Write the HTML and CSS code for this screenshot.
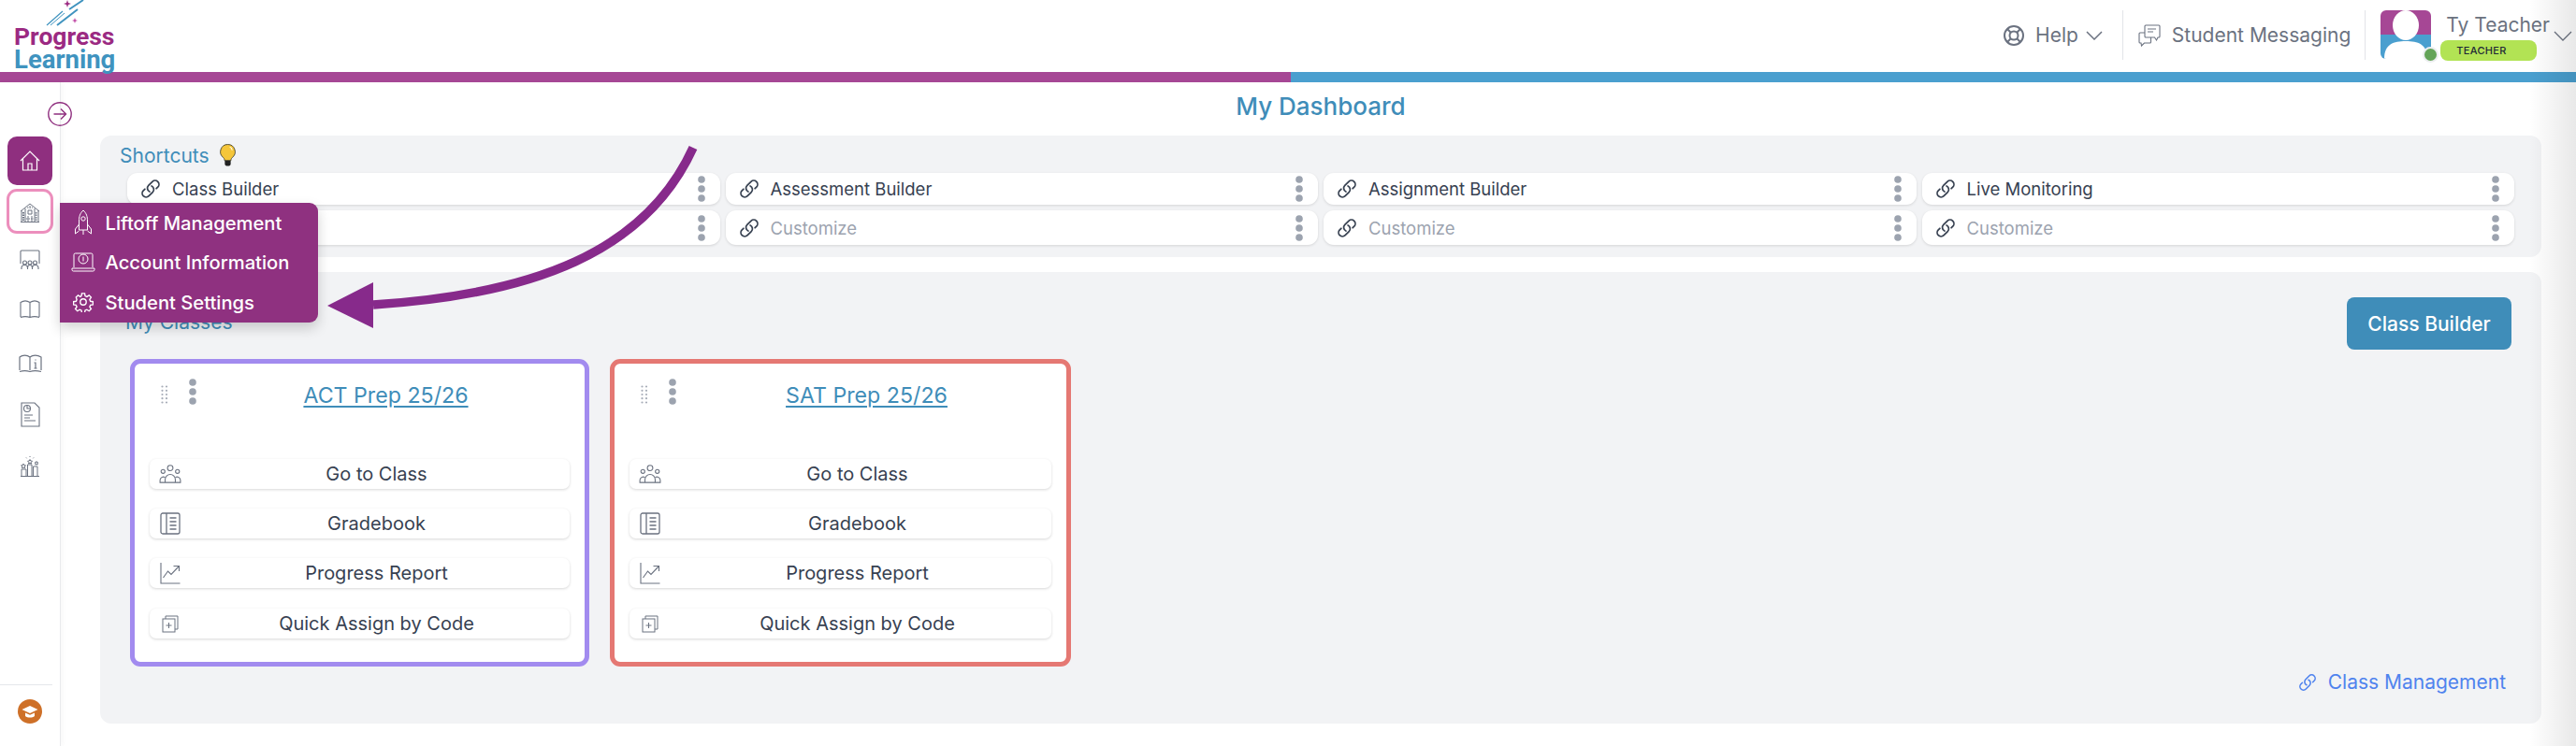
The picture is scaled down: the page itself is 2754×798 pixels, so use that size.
FILE: index.html
```html
<!DOCTYPE html>
<html lang="en">
<head>
<meta charset="utf-8">
<title>My Dashboard</title>
<link rel="stylesheet" href="styles.css">
</head>
<body>
<svg class="sprites" width="0" height="0">
  <symbol id="link" viewBox="0 0 24 24"><path d="M13.190 8.688a4.500 4.500 0 0 1 1.242 7.244l-4.500 4.500a4.500 4.500 0 0 1-6.364-6.364l1.757-1.757m13.350-.622 1.757-1.757a4.500 4.500 0 0 0-6.364-6.364l-4.500 4.500a4.500 4.500 0 0 0 1.242 7.244" fill="none" stroke="currentColor" stroke-width="1.900" stroke-linecap="round" stroke-linejoin="round"/></symbol>
  <symbol id="dots" viewBox="0 0 8 28"><circle cx="4" cy="4" r="3.800"/><circle cx="4" cy="14" r="3.800"/><circle cx="4" cy="24" r="3.800"/></symbol>
  <symbol id="grip" viewBox="0 0 8 20"><g fill="#a7adb8"><circle cx="1.500" cy="1.500" r="1.100"/><circle cx="6" cy="1.500" r="1.100"/><circle cx="1.500" cy="5.800" r="1.100"/><circle cx="6" cy="5.800" r="1.100"/><circle cx="1.500" cy="10" r="1.100"/><circle cx="6" cy="10" r="1.100"/><circle cx="1.500" cy="14.200" r="1.100"/><circle cx="6" cy="14.200" r="1.100"/><circle cx="1.500" cy="18.500" r="1.100"/><circle cx="6" cy="18.500" r="1.100"/></g></symbol>
  <symbol id="people" viewBox="0 0 26 22"><g fill="none" stroke="currentColor" stroke-width="1.200"><circle cx="13" cy="4" r="3.200"/><circle cx="4.500" cy="8" r="2.300"/><circle cx="21.500" cy="8" r="2.300"/><path d="M7 21v-3.500a6 6 0 0 1 12 0V21"/><path d="M7 15a4 4 0 0 0-6 3.500V21h24v-2.500a4 4 0 0 0-6-3.500"/></g></symbol>
  <symbol id="ledger" viewBox="0 0 22 24"><g fill="none" stroke="currentColor" stroke-width="1.300"><rect x="1" y="1" width="20" height="22" rx="2"/><path d="M7 1v22"/><path d="M10.500 6h7M10.500 10h7M10.500 14h7M10.500 18h7"/></g></symbol>
  <symbol id="chart" viewBox="0 0 22 24"><g fill="none" stroke="currentColor" stroke-width="1.100"><path d="M1 1v22h20.500"/><path d="M3.500 17l5-7 3.500 3.500L20 5"/><path d="M14.500 4.500H20.500V10"/></g></symbol>
  <symbol id="copy" viewBox="0 0 18 20"><g fill="none" stroke="currentColor" stroke-width="1"><rect x="1" y="5" width="13" height="14"/><path d="M4 5V2h13v14h-3"/><path d="M7.500 9v6M4.500 12h6"/></g></symbol>
</svg>

<header class="topbar">
  <div class="logo">
    <svg class="logo-mark" width="90" height="28" viewBox="0 0 90 28"><g stroke="#3f93bf" fill="none"><path d="M50 27 67 12" stroke-width="1.200"/><path d="M54 27 69 14" stroke-width="1"/><path d="M61 27 83 10" stroke-width="2"/><path d="M74 10 89 0" stroke-width="2"/></g><path d="M72 0l1 3 3 1-3 1-1 3-1-3-3-1 3-1z" fill="#9b2a82"/><path d="M80 19l.8 2.200 2.200.8-2.200.8-.8 2.200-.8-2.200-2.200-.8 2.200-.8z" fill="#c04aa5"/></svg>
    <span class="logo-a">Progress</span>
    <span class="logo-b">Learning</span>
  </div>
  <nav class="top-nav">
    <div class="top-item help">
      <svg width="24" height="24" viewBox="0 0 24 24" fill="none" stroke="#6b7280" stroke-width="2"><circle cx="12" cy="12" r="10"/><circle cx="12" cy="12" r="4.500"/><path d="M5 5l4 4M19 5l-4 4M5 19l4-4M19 19l-4-4"/></svg>
      <span>Help</span>
      <svg class="chev" width="18" height="10" viewBox="0 0 18 10" fill="none" stroke="#6b7280" stroke-width="1.500"><path d="M1 1l8 8 8-8"/></svg>
    </div>
    <div class="top-item msg">
      <svg width="24" height="24" viewBox="0 0 24 24" fill="none" stroke="#6b7280" stroke-width="1.100"><path d="M8 1h14a1 1 0 0 1 1 1v11a1 1 0 0 1-1 1h-1l-1.500 3-2-3H8a1 1 0 0 1-1-1V2a1 1 0 0 1 1-1z"/><path d="M10 5h9M10 8h6"/><path d="M7 9H2a1 1 0 0 0-1 1v9a1 1 0 0 0 1 1h1l.5 3 3-3h6a1 1 0 0 0 1-1v-5"/></svg>
      <span>Student Messaging</span>
    </div>
    <div class="user">
      <div class="avatar">
        <svg width="54" height="52" viewBox="0 0 54 52"><rect width="54" height="26" fill="#a64795"/><rect y="26" width="54" height="26" fill="#4a9fcf"/><ellipse cx="27" cy="16" rx="14" ry="16" fill="#fff"/><path d="M4 52c0-16 10-19 23-19s23 3 23 19z" fill="#fff"/></svg>
        <i class="presence"></i>
      </div>
      <div class="user-text">
        <span class="user-name">Ty Teacher</span>
        <span class="user-role">TEACHER</span>
      </div>
      <svg class="user-chev" width="20" height="11" viewBox="0 0 20 11" fill="none" stroke="#6b7280" stroke-width="1.300"><path d="M1 1l9 9 9-9"/></svg>
    </div>
  </nav>
</header>
<div class="stripe"><span class="stripe-a"></span><span class="stripe-b"></span></div>

<div class="shell">
  <aside class="sidebar">
    <div class="side-toggle">
      <svg width="26" height="26" viewBox="0 0 26 26" fill="none" stroke="#8f2f7f" stroke-width="1.400"><circle cx="13" cy="13" r="12.200"/><path d="M6.500 13h13M14 7.500l5.500 5.500-5.500 5.500"/></svg>
    </div>
    <div class="side-tile active">
      <svg width="22" height="22" viewBox="0 0 22 22" fill="none" stroke="#fff" stroke-width="1.200"><path d="M1 11 11 1l10 10"/><path d="M3.500 9v12h15V9"/><path d="M9 21v-7h4v7"/></svg>
    </div>
    <div class="side-tile outlined">
      <svg width="22" height="22" viewBox="0 0 22 22" fill="none" stroke="#6b7280" stroke-width="1"><path d="M1 9 11 1l10 8"/><path d="M2 8v12M20 8v12M6 6v14M16 6v14M9 8h4v4H9zM9 14v6M13 14v6M1 20.500h20"/><path d="M3.500 10v9M4.500 10v9M18 10v9M17.200 10v9M11 3v3M8 5h6M7 17h8" stroke-dasharray="1.500 1"/></svg>
    </div>
    <div class="side-icon class-room">
      <svg width="22" height="22" viewBox="0 0 22 22" fill="none" stroke="#6b7280" stroke-width="1.100"><path d="M1 15V2a1 1 0 0 1 1-1h18a1 1 0 0 1 1 1v13"/><circle cx="5.500" cy="14" r="2"/><circle cx="11" cy="14" r="2"/><circle cx="16.500" cy="14" r="2"/><path d="M2 21v-1.500c0-2 1.500-3 3.500-3s3 1 3 3V21M8.500 21v-1.500c0-2 1-3 2.500-3s2.500 1 2.500 3V21M13.500 21v-1.500c0-2 1-3 3-3s3.500 1 3.500 3V21"/></svg>
    </div>
    <div class="side-icon book">
      <svg width="22" height="20" viewBox="0 0 22 20" fill="none" stroke="#6b7280" stroke-width="1.100"><path d="M1 18V2.500c3-2 7-2 10 0 3-2 7-2 10 0V18M11 2.500V18M1 18.500c3-1 7-1 10 0 3-1 7-1 10 0"/></svg>
    </div>
    <div class="side-icon book-info">
      <svg width="25" height="20" viewBox="0 0 25 20" fill="none" stroke="#6b7280" stroke-width="1.200"><path d="M1 17V3c3-2.500 8-2.500 11 0 3-2.500 8-2.500 12 0v14M12 3v14M1 18.500c3-1 8-1 11 0 3-1 8-1 12 0"/><path d="M18 5.500v1M16.500 9H18v6M16.500 15h3"/></svg>
    </div>
    <div class="side-icon report">
      <svg width="21" height="27" viewBox="0 0 21 27" fill="none" stroke="#6b7280" stroke-width="1.100"><path d="M1 1h14l5 5v20H1z"/><circle cx="7" cy="7" r="3.500"/><path d="M7 4v3h3M4 14h9M4 17h6M4 20h12"/></svg>
    </div>
    <div class="side-icon awards">
      <svg width="22" height="23" viewBox="0 0 22 23" fill="none" stroke="#6b7280" stroke-width="1"><path d="M1 21.500h20"/><path d="M2 21v-7h5v7M8.500 21V9h4.500v12M14.500 21V11h4.500v10"/><path d="M4 8l.8 1.600 1.700.2-1.200 1.200.3 1.700L4 12l-1.500.7.300-1.700L1.600 9.800l1.700-.2zM18 5.500l.6 1.200 1.300.2-1 .9.300 1.300-1.200-.6-1.200.6.300-1.300-1-.9 1.300-.2z"/><path d="M11 3.500l.8 1.500 1.700.2-1.200 1.200.3 1.600-1.600-.8-1.500.8.300-1.600-1.200-1.200 1.700-.2z"/><path d="M11 0v1.500M7 1.500l1 1.200M15 1.500l-1 1.200" stroke-dasharray="1 .6"/></svg>
    </div>
    <div class="side-foot">
      <svg width="26" height="26" viewBox="0 0 26 26"><circle cx="13" cy="13" r="13" fill="#ce7028"/><path d="M4.500 11 13 7l8.500 4-8.500 4z" fill="#fff"/><path d="M8 14.500V18c2.500 2 7.500 2 10 0v-3.500l-5 2.300z" fill="#fff"/></svg>
    </div>
  </aside>

  <main class="content">
    <h1 class="page-title">My Dashboard</h1>

    <section class="panel shortcuts">
      <div class="shortcuts-head">
        <span>Shortcuts</span>
        <svg width="17" height="24" viewBox="0 0 16 23"><path d="M8 .5a7.500 7.500 0 0 0-4.500 13.500c1 1 1.200 2 1.200 3h6.600c0-1 .2-2 1.200-3A7.500 7.500 0 0 0 8 .5z" fill="#f5c63a" stroke="#3a3a2a" stroke-width=".8"/><path d="M5 17h6v3.500c0 1-1 2-3 2s-3-1-3-2z" fill="#222"/><path d="M10 3a4 4 0 0 1 2.500 3.500" fill="none" stroke="#fff" stroke-width="1"/></svg>
      </div>
      <div class="chip-grid">
        <div class="chip"><svg class="chip-link"><use href="#link"/></svg><span>Class Builder</span><svg class="kebab"><use href="#dots"/></svg></div>
        <div class="chip"><svg class="chip-link"><use href="#link"/></svg><span>Assessment Builder</span><svg class="kebab"><use href="#dots"/></svg></div>
        <div class="chip"><svg class="chip-link"><use href="#link"/></svg><span>Assignment Builder</span><svg class="kebab"><use href="#dots"/></svg></div>
        <div class="chip"><svg class="chip-link"><use href="#link"/></svg><span>Live Monitoring</span><svg class="kebab"><use href="#dots"/></svg></div>
        <div class="chip tall muted"><svg class="chip-link"><use href="#link"/></svg><span>Customize</span><svg class="kebab"><use href="#dots"/></svg></div>
        <div class="chip tall muted"><svg class="chip-link"><use href="#link"/></svg><span>Customize</span><svg class="kebab"><use href="#dots"/></svg></div>
        <div class="chip tall muted"><svg class="chip-link"><use href="#link"/></svg><span>Customize</span><svg class="kebab"><use href="#dots"/></svg></div>
        <div class="chip tall muted"><svg class="chip-link"><use href="#link"/></svg><span>Customize</span><svg class="kebab"><use href="#dots"/></svg></div>
      </div>
    </section>

    <section class="panel classes">
      <div class="classes-head">
        <span class="classes-title">My Classes</span>
        <button class="primary">Class Builder</button>
      </div>
      <div class="class-row">
        <article class="class-card violet">
          <div class="card-head">
            <svg class="grip"><use href="#grip"/></svg>
            <svg class="kebab"><use href="#dots"/></svg>
            <a class="card-title">ACT Prep 25/26</a>
          </div>
          <div class="card-actions">
            <div class="action"><svg class="a-people"><use href="#people"/></svg><span>Go to Class</span></div>
            <div class="action"><svg class="a-ledger"><use href="#ledger"/></svg><span>Gradebook</span></div>
            <div class="action"><svg class="a-ledger"><use href="#chart"/></svg><span>Progress Report</span></div>
            <div class="action last"><svg class="a-copy"><use href="#copy"/></svg><span>Quick Assign by Code</span></div>
          </div>
        </article>
        <article class="class-card coral">
          <div class="card-head">
            <svg class="grip"><use href="#grip"/></svg>
            <svg class="kebab"><use href="#dots"/></svg>
            <a class="card-title">SAT Prep 25/26</a>
          </div>
          <div class="card-actions">
            <div class="action"><svg class="a-people"><use href="#people"/></svg><span>Go to Class</span></div>
            <div class="action"><svg class="a-ledger"><use href="#ledger"/></svg><span>Gradebook</span></div>
            <div class="action"><svg class="a-ledger"><use href="#chart"/></svg><span>Progress Report</span></div>
            <div class="action last"><svg class="a-copy"><use href="#copy"/></svg><span>Quick Assign by Code</span></div>
          </div>
        </article>
      </div>
      <div class="classes-foot">
        <a class="manage"><svg class="manage-link"><use href="#link"/></svg>Class Management</a>
      </div>
    </section>
  </main>
</div>

<div class="flyout">
  <div class="fly-item">
    <span class="fly-icon"><svg width="20" height="28" viewBox="0 0 20 28" fill="none" stroke="#fff" stroke-width="1"><path d="M10 1c3.500 3 4.500 7 4.500 11v10h-9V12C5.500 8 6.500 4 10 1z"/><circle cx="10" cy="10" r="2.200"/><path d="M5.500 16 1.500 21v5l4-3M14.500 16l4 5v5l-4-3M10 22v5"/></svg></span>
    <span>Liftoff Management</span>
  </div>
  <div class="fly-item">
    <span class="fly-icon"><svg width="26" height="21" viewBox="0 0 26 21" fill="none" stroke="#fff" stroke-width="1"><path d="M3 16V2.500A1.500 1.500 0 0 1 4.500 1h17A1.500 1.500 0 0 1 23 2.500V16"/><circle cx="13" cy="7" r="5"/><path d="M13 4.500v5"/><path d="M1 17h24v1.500a1.500 1.500 0 0 1-1.500 1.500h-21A1.500 1.500 0 0 1 1 18.500z"/></svg></span>
    <span>Account Information</span>
  </div>
  <div class="fly-item">
    <span class="fly-icon"><svg width="22" height="22" viewBox="0 0 24 24" fill="none" stroke="#fff" stroke-width="1.500"><circle cx="12" cy="12" r="3.500"/><path d="M10.300 2h3.400l.5 3 2 .9 2.600-1.700 2.400 2.400-1.700 2.600.9 2 3 .5v3.400l-3 .5-.9 2 1.700 2.600-2.400 2.400-2.600-1.700-2 .9-.5 3h-3.400l-.5-3-2-.9-2.600 1.700-2.400-2.400 1.700-2.600-.9-2-3-.5v-3.400l3-.5.9-2L3.600 6.600 6 4.200l2.600 1.700 1.200-.9z"/></svg></span>
    <span>Student Settings</span>
  </div>
</div>

<svg class="callout" width="460" height="240" viewBox="0 0 460 240">
  <path d="M391 8C340 120 220 165 49 176" fill="none" stroke="#872a8b" stroke-width="9.500"/>
  <path d="M0 177 49 152V201z" fill="#872a8b"/>
</svg>
<div class="edge-shade"></div>
</body>
</html>
```

FILE: styles.css
```css
* { box-sizing: border-box; }
html, body { margin: 0; padding: 0; }
body {
  position: relative;
  width: 2754px;
  height: 798px;
  overflow: hidden;
  background: #fff;
  font-family: Inter, "Liberation Sans", sans-serif;
  color: #374151;
}
.sprites { position: absolute; }

/* top bar */
.topbar {
  height: 77px;
  display: flex;
  justify-content: space-between;
  background: #fff;
}
.logo {
  width: 140px;
  padding-left: 15px;
  display: flex;
  flex-direction: column;
  position: relative;
  font-family: Roboto, Inter, sans-serif;
  font-weight: 700;
  font-size: 26.500px;
  line-height: 25px;
}
.logo-mark { position: absolute; left: 0; top: 0; }
.logo-a { color: #9b2a82; margin-top: 26px; }
.logo-b { color: #3f93bf; font-size: 27.500px; }

.top-nav { display: flex; align-items: stretch; padding-right: 4px; }
.top-item {
  display: flex;
  align-items: center;
  font-size: 21px;
  color: #6b7280;
  margin: 11px 0 13px;
}
.help { padding-right: 21px; border-right: 1px solid #e2e4e8; }
.help span { margin-left: 11px; }
.help .chev { margin-left: 8px; }
.msg { padding: 0 15px 0 16px; border-right: 1px solid #e2e4e8; }
.msg span { margin-left: 12px; }

.user { display: flex; padding-left: 16px; position: relative; }
.avatar {
  position: relative;
  width: 54px;
  height: 52px;
  margin-top: 11px;
  border-radius: 6px;
  border-bottom: 1px solid #d1d5db;
}
.avatar svg { display: block; border-radius: 6px; }
.presence {
  position: absolute;
  right: -8px;
  bottom: -5px;
  width: 17px;
  height: 17px;
  border-radius: 50%;
  background: #64a458;
  border: 2px solid #eceef0;
}
.user-text { display: flex; flex-direction: column; margin-left: 10px; align-items: flex-start; }
.user-name { font-size: 21px; line-height: 24px; margin: 15px 0 4px 6px; color: #6b7280; white-space: nowrap; }
.user-role {
  width: 103px;
  height: 22px;
  border-radius: 8px;
  background: #b2e354;
  color: #1f2937;
  font-size: 11px;
  font-weight: 500;
  line-height: 22px;
  padding-left: 17px;
  letter-spacing: .3px;
}
.user-chev { margin: 33px 0 0 4px; }

.stripe { display: flex; height: 11px; }
.stripe-a { width: 1380px; background: #a64795; }
.stripe-b { flex: 1; background: #4a9fcf; }

/* shell */
.shell { display: flex; height: 710px; }
.sidebar {
  width: 65px;
  flex: none;
  border-right: 1px solid #e9eaec;
  box-shadow: 2px 0 6px rgba(0,0,0,.03);
  display: flex;
  flex-direction: column;
  align-items: flex-start;
}
.side-toggle { height: 26px; margin: 21px 0 11px 51px; }
.side-toggle svg { display: block; position: relative; z-index: 3; }
.side-tile {
  display: flex;
  align-items: center;
  justify-content: center;
  width: 48px;
  margin-left: 8px;
  border-radius: 10px;
}
.side-tile.active { height: 52px; background: #8f2f7f; margin-bottom: 4px; }
.side-tile.outlined { height: 48px; width: 50px; margin-left: 7px; padding-top: 4px; background: #fff; border: 3px solid #ec8fbd; border-radius: 11px; }
.side-icon { width: 64px; display: flex; justify-content: center; }
.side-icon svg { display: block; }
.class-room { margin-top: 17px; }
.book { margin-top: 32px; }
.book-info { margin-top: 38px; }
.report { margin-top: 31px; }
.awards { margin-top: 31px; }
.side-foot {
  margin-top: auto;
  width: 56px;
  height: 66px;
  border-top: 1px solid #e5e7eb;
  padding: 15px 0 0 19px;
}
.side-foot svg { display: block; }

.content { flex: 1; padding: 0 37px 0 42px; min-width: 0; }
.page-title {
  margin: 0;
  height: 57px;
  font-size: 26px;
  font-weight: 500;
  line-height: 51px;
  text-align: center;
  color: #3f8db9;
}
.panel { background: #f2f3f5; border-radius: 12px; }

/* shortcuts */
.shortcuts { height: 130px; margin-bottom: 16px; padding: 9px 29px 0; }
.shortcuts-head {
  display: flex;
  align-items: center;
  gap: 11px;
  height: 24px;
  margin: 0 0 7px -8px;
  font-size: 21px;
  color: #3f8db9;
}
.chip-grid { display: grid; grid-template-columns: repeat(4, 1fr); column-gap: 6px; row-gap: 6px; }
.chip {
  height: 34px;
  display: flex;
  align-items: center;
  background: #fff;
  border-radius: 11px;
  box-shadow: 0 1px 3px rgba(0,0,0,.12);
  font-size: 18.500px;
  padding: 0 16px 0 14px;
  color: #374151;
}
.chip.tall { height: 37px; }
.chip.muted span { color: #9ca3af; }
.chip-link { width: 22px; height: 22px; color: #374151; flex: none; margin-right: 12px; }
.chip span { flex: 1; }
.kebab { width: 8px; height: 28px; fill: #9ca3af; flex: none; }

/* classes */
.classes { height: 483px; padding: 27px 32px 0; }
.classes-head { display: flex; justify-content: space-between; height: 56px; }
.classes-title { font-size: 21px; color: #3f8db9; margin: 15px 0 0 -5px; line-height: 24px; }
.primary {
  width: 176px;
  height: 56px;
  border: 0;
  border-radius: 8px;
  background: #3f8db9;
  color: #fff;
  font: 500 21px Inter, sans-serif;
}
.class-row { display: flex; gap: 22px; margin-top: 10px; }
.class-card {
  width: 491px;
  height: 329px;
  background: #fff;
  border: 5px solid;
  border-radius: 11px;
}
.class-card.coral { width: 493px; }
.violet { border-color: #a28bef; }
.coral { border-color: #e57873; }
.card-head { display: flex; align-items: flex-start; padding: 16px 0 0 28px; height: 102px; }
.grip { width: 8px; height: 20px; margin-top: 7px; flex: none; }
.card-head .kebab { margin-left: 22px; }
.card-title {
  flex: 1;
  text-align: center;
  padding: 3px 10px 0 0;
  font-size: 23.200px;
  line-height: 30px;
  color: #3f8db9;
  text-decoration: underline;
  text-underline-offset: 3px;
}
.card-actions { display: flex; flex-direction: column; padding: 0 16px; }
.action {
  height: 32px;
  display: flex;
  align-items: center;
  background: #fff;
  border-radius: 7px;
  box-shadow: 0 1px 3px rgba(0,0,0,.16);
  font-size: 20px;
  color: #374151;
  padding-left: 10px;
  margin-bottom: 21px;
}
.action.last { margin-top: 1px; margin-bottom: 0; }
.action span { flex: 1; text-align: center; padding-left: 2px; }
.action svg { color: #6b7280; flex: none; }
.a-people { width: 24px; height: 20px; }
.a-ledger { width: 24px; height: 24px; }
.a-copy { width: 18px; height: 20px; margin: 0 3px; }

.classes-foot { display: flex; justify-content: flex-end; margin-top: 5px; padding-right: 6px; }
.manage {
  display: flex;
  align-items: center;
  gap: 12px;
  color: #4f83ee;
  font-size: 21px;
  line-height: 24px;
}
.manage-link { width: 20px; height: 20px; color: #4f83ee; }

/* overlays */
.flyout {
  position: absolute;
  left: 64px;
  top: 217px;
  width: 276px;
  height: 128px;
  background: #8f3180;
  border-radius: 0 9px 9px 0;
  box-shadow: 0 6px 14px rgba(0,0,0,.18);
  color: #fff;
  font-size: 20.200px;
  font-weight: 500;
  display: flex;
  flex-direction: column;
}
.fly-item { height: 42.500px; display: flex; align-items: center; }
.fly-icon { width: 48.500px; display: flex; justify-content: center; flex: none; padding-left: 2px; }
.callout { position: absolute; left: 350px; top: 150px; pointer-events: none; }
.edge-shade {
  position: absolute;
  top: 0;
  right: 0;
  width: 50px;
  height: 798px;
  background: linear-gradient(to right, rgba(0,0,0,0), rgba(0,0,0,.09));
  pointer-events: none;
}
```
